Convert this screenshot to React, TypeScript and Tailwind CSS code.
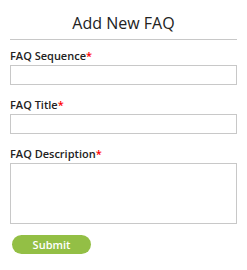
import React from 'react';

export default function App() {
  return (
    <div className="w-[247px] h-[270px] bg-white px-[10px] pt-[12px]" style={{ fontFamily: '"Open Sans", sans-serif' }}>
      <h2 className="text-center text-[16px] leading-[22px] text-[#222] pb-[5px] border-b border-[#c8c8c8]">Add New FAQ</h2>

      <div className="mt-[8px]">
        <label className="block text-[11px] leading-[16px] font-semibold text-[#222]">
          FAQ Sequence<span className="text-[#ff0000]">*</span>
        </label>
        <input className="block w-full h-[20px] mt-[1px] border border-[#c8c8c8] outline-none" />
      </div>

      <div className="mt-[12px]">
        <label className="block text-[11px] leading-[16px] font-semibold text-[#222]">
          FAQ Title<span className="text-[#ff0000]">*</span>
        </label>
        <input className="block w-full h-[20px] mt-[1px] border border-[#c8c8c8] outline-none" />
      </div>

      <div className="mt-[12px]">
        <label className="block text-[11px] leading-[16px] font-semibold text-[#222]">
          FAQ Description<span className="text-[#ff0000]">*</span>
        </label>
        <textarea className="block w-full h-[61px] mt-[1px] border border-[#c8c8c8] outline-none resize-none" />
      </div>

      <button className="mt-[11px] ml-[2px] w-[79px] h-[19px] rounded-full bg-[#93bf45] text-white text-[11px] font-semibold leading-[19px]">
        Submit
      </button>
    </div>
  );
}
